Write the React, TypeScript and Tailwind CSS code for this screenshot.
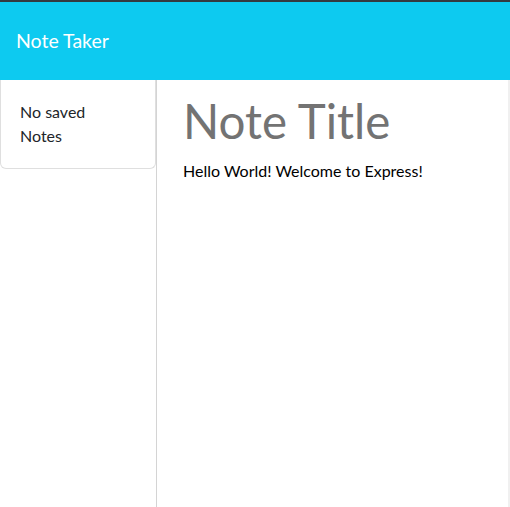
export default function App() {
  return (
    <div className="flex h-[507px] w-full flex-col border-t-2 border-[#343a40] font-['Lato',sans-serif]">
      <nav className="flex h-[78px] items-center bg-[#0dcaf0] px-4">
        <span className="text-[19.5px] text-white">Note Taker</span>
      </nav>
      <div className="flex flex-1 border-r-2 border-[#f0f0f0]">
        <aside className="w-[157px] shrink-0 border-r border-[#d4d4d4]">
          <ul className="rounded-b-md border border-t-0 border-[#dfdfdf]">
            <li className="py-5 pl-[19px] pr-10 text-base leading-6 text-[#212529]">No saved Notes</li>
          </ul>
        </aside>
        <main className="flex-1 pl-[26px] pt-[12px]">
          <h1 className="text-[47.5px] leading-[1.2] text-[#737373]">Note Title</h1>
          <p className="mt-[10px] text-base leading-6 text-black">Hello World! Welcome to Express!</p>
        </main>
      </div>
    </div>
  );
}
